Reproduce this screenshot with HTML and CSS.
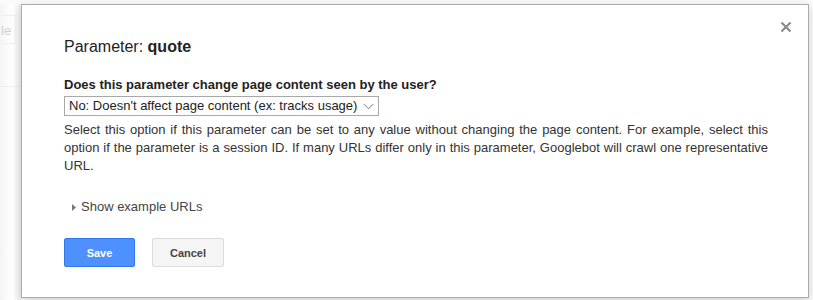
FILE: index.html
```html
<!DOCTYPE html>
<html>
<head>
<meta charset="utf-8">
<link rel="stylesheet" href="styles.css">
</head>
<body>
<div class="page">
  <div class="bg-strip">
    <div class="bg-tab">le</div>
    <div class="bg-line"></div>
  </div>
  <div class="dialog">
    <svg class="close" width="12" height="12" viewBox="0 0 12 12"><path d="M1.5 1.5 L10.5 10.5 M10.5 1.5 L1.5 10.5" stroke="#8a8a8a" stroke-width="2.2" fill="none"/></svg>
    <h1 class="title">Parameter: <b>quote</b></h1>
    <p class="question">Does this parameter change page content seen by the user?</p>
    <div class="select">
      <span>No: Doesn't affect page content (ex: tracks usage)</span>
      <svg width="11" height="7" viewBox="0 0 11 7"><path d="M0.5 0.8 L5.5 5.8 L10.5 0.8" stroke="#777" stroke-width="1" fill="none"/></svg>
    </div>
    <p class="desc">Select this option if this parameter can be set to any value without changing the page content. For example, select this option if the parameter is a session ID. If many URLs differ only in this parameter, Googlebot will crawl one representative URL.</p>
    <div class="examples">
      <svg width="4" height="7" viewBox="0 0 4 7"><path d="M0 0 L4 3.5 L0 7 Z" fill="#777"/></svg>
      <span>Show example URLs</span>
    </div>
    <div class="buttons">
      <button class="btn btn-primary">Save</button>
      <button class="btn btn-default">Cancel</button>
    </div>
  </div>
</div>
</body>
</html>
```

FILE: styles.css
```css
html, body {
  margin: 0;
  padding: 0;
  background: #fbfbfb;
  font-family: "Liberation Sans", Arial, sans-serif;
  color: #222;
  overflow: hidden;
}
.page {
  position: relative;
  width: 813px;
  height: 300px;
  display: flex;
  padding: 4px 0 0 0;
  box-sizing: border-box;
}
.bg-strip {
  width: 21px;
  flex: none;
  background: linear-gradient(to right, #f4f4f4, #ffffff 60%, #f0f0f0);
}
.bg-tab {
  width: 16px;
  margin-top: 11px;
  height: 29px;
  border-top: 1px solid #f0f0f0;
  border-bottom: 1px solid #f0f0f0;
  border-right: 1px solid #f2f2f2;
  font-size: 13px;
  color: #d0d0d0;
  line-height: 29px;
  padding-left: 1px;
  box-sizing: border-box;
  white-space: nowrap;
}
.bg-line {
  margin-top: 42px;
  height: 1px;
  background: #eeeeee;
}
.dialog {
  position: relative;
  width: 788px;
  height: 294px;
  box-sizing: border-box;
  background: #fff;
  border: 1px solid #acacac;
  box-shadow: 0 3px 10px rgba(0,0,0,0.18);
  padding: 29px 40px 0 42px;
  display: flex;
  flex-direction: column;
  align-items: flex-start;
}
.close {
  position: absolute;
  top: 16px;
  right: 16px;
}
.title {
  margin: 0;
  font-size: 16px;
  font-weight: normal;
  line-height: 26px;
  color: #222;
}
.title b {
  font-weight: bold;
}
.question {
  margin: 16px 0 0 0;
  font-size: 13px;
  font-weight: bold;
  line-height: 18px;
  color: #222;
}
.select {
  margin-top: 2px;
  height: 20px;
  box-sizing: border-box;
  border: 1px solid #a9a9a9;
  display: flex;
  align-items: center;
  gap: 6px;
  padding: 0 4px 0 4px;
  font-size: 13px;
  color: #222;
}
.select span {
  line-height: 18px;
}
.desc {
  margin: 5px 0 0 0;
  font-size: 13px;
  line-height: 18px;
  color: #333;
  text-align: justify;
  align-self: stretch;
}
.examples {
  margin-top: 23px;
  margin-left: 8px;
  display: flex;
  align-items: center;
  gap: 5px;
  font-size: 13px;
  line-height: 18px;
  color: #444;
}
.buttons {
  margin-top: 22px;
  display: flex;
  gap: 17px;
}
.btn {
  height: 29px;
  box-sizing: border-box;
  border-radius: 2px;
  font-family: "Liberation Sans", Arial, sans-serif;
  font-size: 11px;
  font-weight: bold;
  padding: 0;
}
.btn-primary {
  width: 71px;
  background: #4d90fe;
  border: 1px solid #3079ed;
  color: #fff;
}
.btn-default {
  width: 72px;
  background: #f5f5f5;
  border: 1px solid #dcdcdc;
  color: #444;
}
```
